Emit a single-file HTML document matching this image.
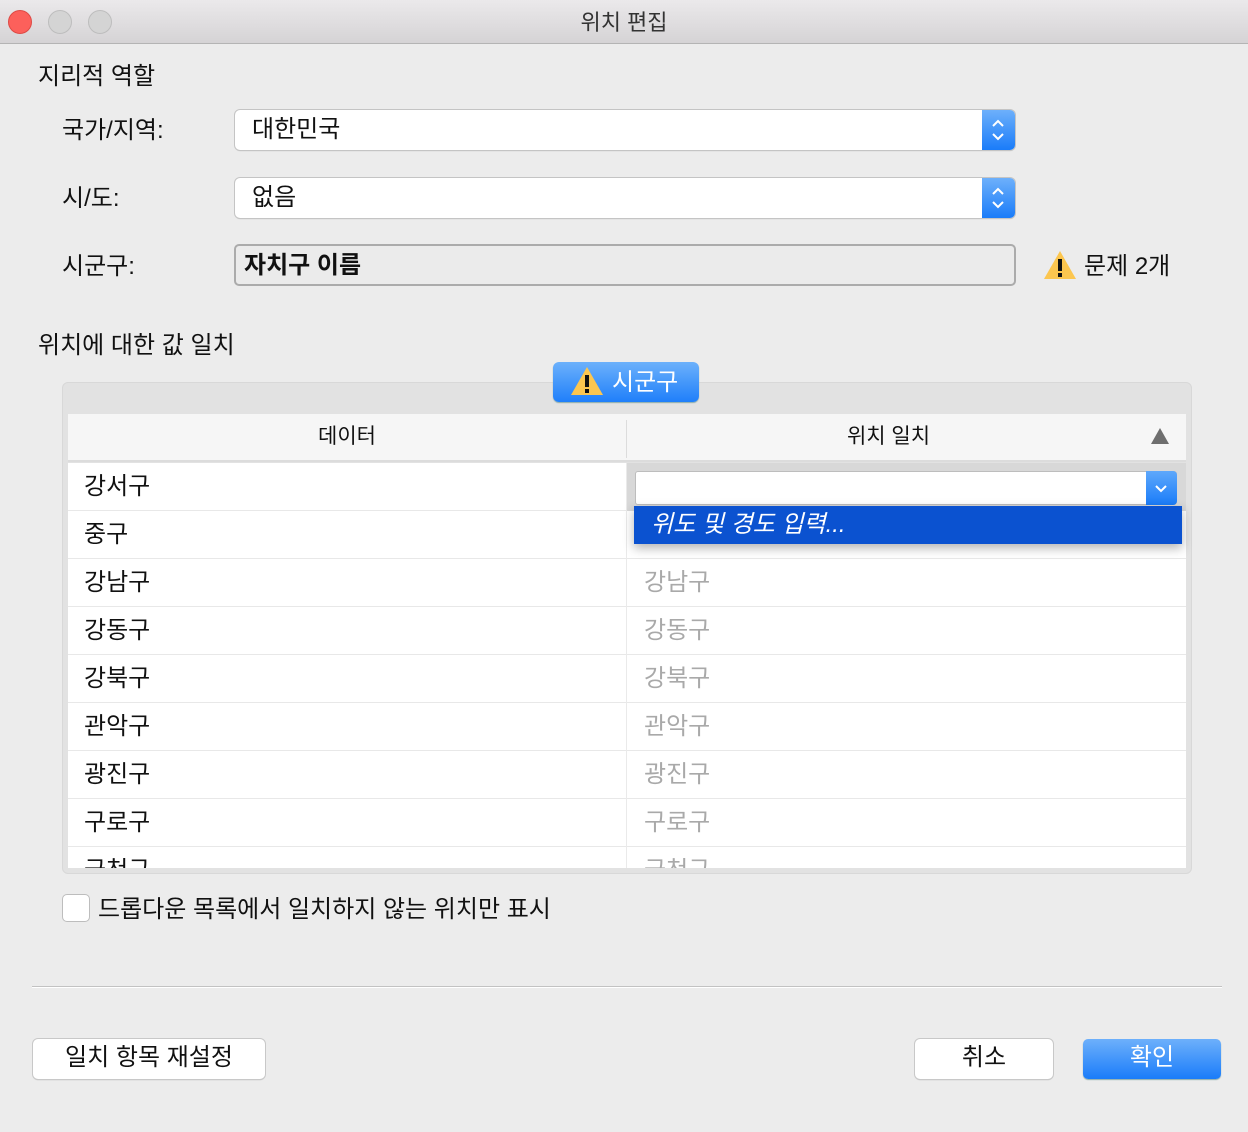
<!DOCTYPE html>
<html><head><meta charset="utf-8"><style>
*{box-sizing:border-box;margin:0;padding:0}
body{width:1248px;height:1132px;background:#ececec;font-family:"Liberation Sans","Noto Sans CJK KR",sans-serif;color:#111;position:relative;overflow:hidden;font-size:24px}
.a{position:absolute;white-space:nowrap;line-height:1}
.tb{position:absolute;left:0;top:0;width:1248px;height:44px;background:linear-gradient(#ebe9eb,#d5d3d5);border-bottom:1px solid #b4b4b4}
.dot{position:absolute;top:10px;width:24px;height:24px;border-radius:50%;background:#d4d4d4;border:1px solid #bdbdbd}
.pop{position:absolute;left:235px;width:780px;height:40px;background:#fff;border-radius:5px;box-shadow:0 0 0 1px #c4c4c4,0 1px 1px #bbb}
.pop .b{position:absolute;right:0;top:0;width:33px;height:40px;border-radius:0 5px 5px 0;background:linear-gradient(#6db0fb,#1a7cf9)}
.row{position:absolute;left:68px;width:1118px;height:48px;border-bottom:1px solid #e8e8e8;background:#fff}
.row .l{position:absolute;left:16px;top:3px}
.row .r{position:absolute;left:576px;top:3px;color:#a9a9a9}
.row .s{position:absolute;left:558px;top:0;width:1px;height:48px;background:#eaeaea}
.btn{position:absolute;top:1039px;height:40px;background:#fff;border-radius:5px;box-shadow:0 0 0 1px #c8c8c8,0 1px 1px #aaa;text-align:center;line-height:36px}
</style></head><body>
<div class="tb"></div>
<div class="dot" style="left:8px;background:#fc605b;border-color:#de4a45"></div>
<div class="dot" style="left:48px"></div>
<div class="dot" style="left:88px"></div>
<div class="a" style="left:0;width:1248px;text-align:center;top:12px;font-size:22px;color:#333">위치 편집</div>

<div class="a" style="left:38px;top:65px">지리적 역할</div>
<div class="a" style="left:62px;top:119px">국가/지역:</div>
<div class="a" style="left:62px;top:187px">시/도:</div>
<div class="a" style="left:62px;top:255px">시군구:</div>

<div class="pop" style="top:110px"><div class="a" style="left:17px;top:8px">대한민국</div><div class="b"><svg width="33" height="40"><path d="M11 16l5-5 5 5M11 24l5 5 5-5" stroke="#fff" stroke-width="2" fill="none"/></svg></div></div>
<div class="pop" style="top:178px"><div class="a" style="left:17px;top:8px">없음</div><div class="b"><svg width="33" height="40"><path d="M11 16l5-5 5 5M11 24l5 5 5-5" stroke="#fff" stroke-width="2" fill="none"/></svg></div></div>
<div style="position:absolute;left:234px;top:244px;width:782px;height:42px;border:2px solid #ababab;border-radius:5px;background:#ebebeb"></div>
<div class="a" style="left:244px;top:254px;font-weight:bold">자치구 이름</div>
<svg style="position:absolute;left:1043px;top:250px" width="34" height="30"><path d="M17 1L33 29H1Z" fill="#fcc64f"/><rect x="15" y="9" width="4" height="12" fill="#111"/><rect x="15" y="23" width="4" height="4" fill="#111"/></svg>
<div class="a" style="left:1084px;top:255px">문제 2개</div>

<div class="a" style="left:38px;top:334px">위치에 대한 값 일치</div>

<div style="position:absolute;left:62px;top:382px;width:1130px;height:492px;background:#e2e2e2;border-radius:6px;border:1px solid #d8d8d8"></div>
<div style="position:absolute;left:68px;top:414px;width:1118px;height:48px;background:#f6f6f6;border-bottom:2px solid #dcdcdc"></div>
<div style="position:absolute;left:626px;top:420px;width:1px;height:38px;background:#dcdcdc"></div>
<div class="a" style="left:68px;width:558px;text-align:center;top:426px;font-size:21px">데이터</div>
<div class="a" style="left:627px;width:523px;text-align:center;top:426px;font-size:21px">위치 일치</div>
<svg style="position:absolute;left:1151px;top:428px" width="18" height="16"><path d="M9 0L18 16H0Z" fill="#6e6e6e"/></svg>

<div style="position:absolute;left:68px;top:463px;width:1118px;height:405px;overflow:hidden">
<div class="row" style="top:0;left:0"><div class="l">강서구</div><div class="s"></div></div>
<div class="row" style="top:48px;left:0"><div class="l">중구</div><div class="s"></div></div>
<div class="row" style="top:96px;left:0"><div class="l">강남구</div><div class="s"></div><div class="r">강남구</div></div>
<div class="row" style="top:144px;left:0"><div class="l">강동구</div><div class="s"></div><div class="r">강동구</div></div>
<div class="row" style="top:192px;left:0"><div class="l">강북구</div><div class="s"></div><div class="r">강북구</div></div>
<div class="row" style="top:240px;left:0"><div class="l">관악구</div><div class="s"></div><div class="r">관악구</div></div>
<div class="row" style="top:288px;left:0"><div class="l">광진구</div><div class="s"></div><div class="r">광진구</div></div>
<div class="row" style="top:336px;left:0"><div class="l">구로구</div><div class="s"></div><div class="r">구로구</div></div>
<div class="row" style="top:384px;left:0"><div class="l">금천구</div><div class="s"></div><div class="r">금천구</div></div>
<div style="position:absolute;left:559px;top:0;width:559px;height:48px;background:#d8d8d8"></div>
</div>
<div style="position:absolute;left:635px;top:471px;width:542px;height:34px;background:#fff;border:1px solid #bdbdbd;border-radius:3px"></div>
<div style="position:absolute;left:1146px;top:471px;width:31px;height:34px;background:linear-gradient(#5ea8fb,#1a7cf9);border-radius:0 4px 4px 0"><svg width="31" height="34"><path d="M10 15l5 5 5-5" stroke="#fff" stroke-width="2" fill="none"/></svg></div>
<div style="position:absolute;left:634px;top:506px;width:548px;height:38px;background:#0b52d0;box-shadow:0 4px 10px rgba(0,0,0,.3)"></div>
<div class="a" style="left:651px;top:513px;color:#fff;font-style:italic">위도 및 경도 입력...</div>

<div style="position:absolute;left:553px;top:362px;width:146px;height:40px;border-radius:6px;background:linear-gradient(#6cb1fb,#1f7ffa);box-shadow:0 1px 1px #8aa"></div>
<svg style="position:absolute;left:570px;top:366px" width="34" height="30"><path d="M17 1L33 29H1Z" fill="#fcc64f"/><rect x="15" y="9" width="4" height="12" fill="#111"/><rect x="15" y="23" width="4" height="4" fill="#111"/></svg>
<div class="a" style="left:612px;top:371px;color:#fff">시군구</div>

<div style="position:absolute;left:62px;top:894px;width:28px;height:28px;background:#fff;border:1px solid #bdbdbd;border-radius:5px"></div>
<div class="a" style="left:98px;top:898px">드롭다운 목록에서 일치하지 않는 위치만 표시</div>

<div style="position:absolute;left:32px;top:986px;width:1190px;height:1px;background:#c2c2c2"></div>
<div style="position:absolute;left:32px;top:987px;width:1190px;height:1px;background:#fff"></div>

<div class="btn" style="left:33px;width:232px;line-height:38px">일치 항목 재설정</div>
<div class="btn" style="left:915px;width:138px;line-height:38px">취소</div>
<div class="btn" style="left:1083px;width:138px;line-height:38px;background:linear-gradient(#6db0fb,#1a7cf9);color:#fff;box-shadow:0 1px 1px #8aa">확인</div>
</body></html>
